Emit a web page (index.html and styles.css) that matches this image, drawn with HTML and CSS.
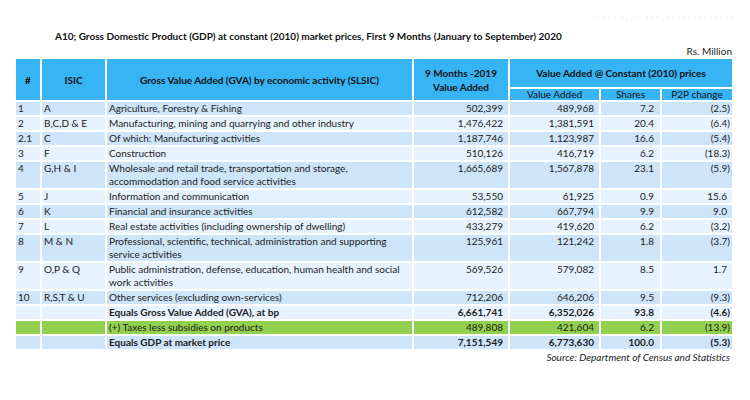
FILE: index.html
```html
<!DOCTYPE html>
<html>
<head>
<meta charset="utf-8">
<link rel="stylesheet" href="styles.css">
</head>
<body>
<div class="page">
  <div class="faint">- - - - -&nbsp;&nbsp;- ,&nbsp;&nbsp;- -&nbsp;&nbsp;- - - , - - - - - - - - - - - - -</div>
  <h1 class="title">A10; Gross Domestic Product (GDP) at constant (2010) market prices, First 9 Months (January to September) 2020</h1>
  <div class="unit">Rs. Million</div>
  <table class="gdp">
    <colgroup>
      <col class="c-no"><col class="c-isic"><col class="c-desc"><col class="c-prev"><col class="c-va"><col class="c-sh"><col class="c-p2p">
    </colgroup>
    <thead>
      <tr class="h1">
        <th rowspan="2">#</th>
        <th rowspan="2">ISIC</th>
        <th rowspan="2">Gross Value Added (GVA) by economic activity (SLSIC)</th>
        <th rowspan="2">9 Months -2019<br>Value Added</th>
        <th colspan="3">Value Added @ Constant (2010) prices</th>
      </tr>
      <tr class="h2">
        <th class="sub">Value Added</th>
        <th class="sub">Shares</th>
        <th class="sub">P2P change</th>
      </tr>
    </thead>
    <tbody>
      <tr class="dk"><td>1</td><td>A</td><td>Agriculture, Forestry &amp; Fishing</td><td class="n">502,399</td><td class="n">489,968</td><td class="n s">7.2</td><td class="n p">(2.5)</td></tr>
      <tr class="lt"><td>2</td><td>B,C,D &amp; E</td><td>Manufacturing, mining and quarrying and other industry</td><td class="n">1,476,422</td><td class="n">1,381,591</td><td class="n s">20.4</td><td class="n p">(6.4)</td></tr>
      <tr class="dk"><td>2.1</td><td>C</td><td>Of which: Manufacturing activities</td><td class="n">1,187,746</td><td class="n">1,123,987</td><td class="n s">16.6</td><td class="n p">(5.4)</td></tr>
      <tr class="lt"><td>3</td><td>F</td><td>Construction</td><td class="n">510,126</td><td class="n">416,719</td><td class="n s">6.2</td><td class="n p">(18.3)</td></tr>
      <tr class="dk"><td>4</td><td>G,H &amp; I</td><td>Wholesale and retail trade, transportation and storage,<br>accommodation and food service activities</td><td class="n">1,665,689</td><td class="n">1,567,878</td><td class="n s">23.1</td><td class="n p">(5.9)</td></tr>
      <tr class="lt"><td>5</td><td>J</td><td>Information and communication</td><td class="n">53,550</td><td class="n">61,925</td><td class="n s">0.9</td><td class="n p pos">15.6</td></tr>
      <tr class="dk"><td>6</td><td>K</td><td>Financial and insurance activities</td><td class="n">612,582</td><td class="n">667,794</td><td class="n s">9.9</td><td class="n p pos">9.0</td></tr>
      <tr class="lt"><td>7</td><td>L</td><td>Real estate activities (including ownership of dwelling)</td><td class="n">433,279</td><td class="n">419,620</td><td class="n s">6.2</td><td class="n p">(3.2)</td></tr>
      <tr class="dk"><td>8</td><td>M &amp; N</td><td>Professional, scientific, technical, administration and supporting<br>service activities</td><td class="n">125,961</td><td class="n">121,242</td><td class="n s">1.8</td><td class="n p">(3.7)</td></tr>
      <tr class="lt"><td>9</td><td>O,P &amp; Q</td><td>Public administration, defense, education, human health and social<br>work activities</td><td class="n">569,526</td><td class="n">579,082</td><td class="n s">8.5</td><td class="n p pos">1.7</td></tr>
      <tr class="dk"><td>10</td><td>R,S,T &amp; U</td><td>Other services (excluding own-services)</td><td class="n">712,206</td><td class="n">646,206</td><td class="n s">9.5</td><td class="n p">(9.3)</td></tr>
      <tr class="lt b"><td></td><td></td><td>Equals Gross Value Added (GVA), at bp</td><td class="n">6,661,741</td><td class="n">6,352,026</td><td class="n s">93.8</td><td class="n p">(4.6)</td></tr>
      <tr class="gr"><td></td><td></td><td>(+) Taxes less subsidies on products</td><td class="n">489,808</td><td class="n">421,604</td><td class="n s">6.2</td><td class="n p">(13.9)</td></tr>
      <tr class="dk b"><td></td><td></td><td>Equals GDP at market price</td><td class="n">7,151,549</td><td class="n">6,773,630</td><td class="n s">100.0</td><td class="n p">(5.3)</td></tr>
    </tbody>
  </table>
  <div class="source">Source: Department of Census and Statistics</div>
</div>
</body>
</html>
```

FILE: styles.css
```css
* { box-sizing: border-box; }
html, body { margin: 0; padding: 0; background: #ffffff; }
body {
  font-family: "Lato", "Noto Sans", sans-serif;
  color: #1c1c1c;
  width: 750px;
  height: 400px;
  overflow: hidden;
}
.page {
  padding: 13px 0 0 14px;
  width: 750px;
}
.faint {
  font-size: 7px;
  line-height: 8px;
  color: #d6d6d6;
  text-align: right;
  width: 720px;
  letter-spacing: 0.5px;
}
.title {
  margin: 9px 0 0 41px;
  font-size: 10px;
  line-height: 13px;
  font-weight: 700;
  color: #111;
}
.unit {
  width: 718px;
  text-align: right;
  font-size: 10px;
  line-height: 12px;
  margin-top: 2px;
  color: #222;
}
.gdp {
  border-collapse: separate;
  border-spacing: 2px;
  table-layout: fixed;
  width: 720px;
  font-size: 10px;
  line-height: 13px;
}
.c-no { width: 24px; }
.c-isic { width: 63px; }
.c-desc { width: 305px; }
.c-prev { width: 94px; }
.c-va { width: 89px; }
.c-sh { width: 59px; }
.c-p2p { width: 70px; }

.gdp th {
  background: #36b4f4;
  font-weight: 700;
  color: #111;
  text-align: center;
  vertical-align: middle;
  padding: 0;
  line-height: 14px;
}
.gdp tr.h1 th { height: 28px; }
.gdp tr.h2 th { height: 11px; line-height: 11px; }
.gdp th.sub { font-weight: 400; }

.gdp td {
  padding: 0 2px;
  vertical-align: top;
  white-space: nowrap;
}
.gdp tr.dk td { background: #cde4f9; }
.gdp tr.lt td { background: #e6f2fd; }
.gdp tr.gr td { background: #92d04f; }
.gdp tr.b td { font-weight: 700; }
.gdp td.n { text-align: right; padding-right: 5px; }
.gdp td.s { padding-right: 6px; }
.gdp td.p { padding-right: 2px; }
.gdp td.pos { padding-right: 5px; }

.source {
  width: 716px;
  text-align: right;
  font-style: italic;
  font-size: 10px;
  line-height: 13px;
  margin-top: 0;
  color: #222;
}
```
